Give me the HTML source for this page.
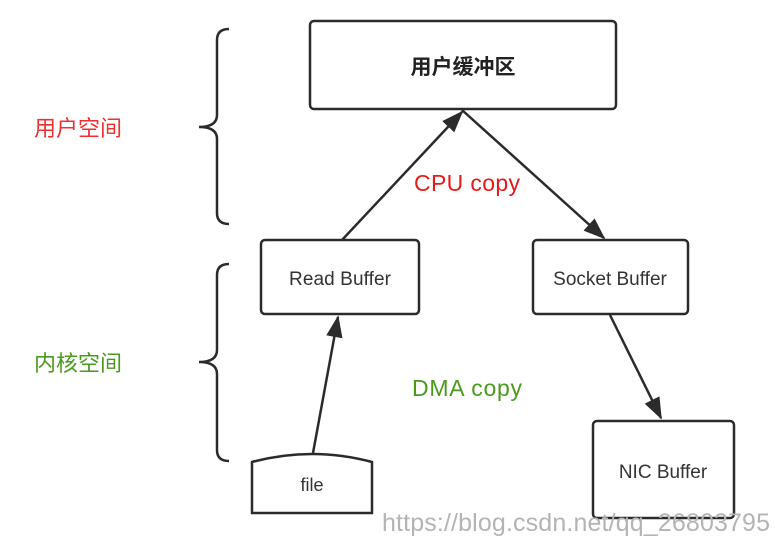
<!DOCTYPE html>
<html><head><meta charset="utf-8"><style>
html,body{margin:0;padding:0;background:#fff;width:775px;height:543px;overflow:hidden}
svg{display:block}
text{font-family:"Liberation Sans","Noto Sans CJK SC",sans-serif}
</style></head><body>
<svg width="775" height="543" viewBox="0 0 775 543">
<defs>
<marker id="b" viewBox="0 0 12 12" refX="11" refY="6" markerWidth="22" markerHeight="22" orient="auto" markerUnits="userSpaceOnUse"><path d="M0,1.5 L12,6 L0,10.5 z" fill="#2b2b2b"/></marker></defs>
<g fill="none" stroke="#2b2b2b" stroke-width="2.5">
<rect x="310" y="21" width="306" height="88" rx="4"/>
<rect x="261" y="240" width="158" height="74" rx="4"/>
<rect x="533" y="240" width="155" height="74" rx="4"/>
<rect x="593" y="421" width="141" height="97" rx="4"/>
<path d="M252,513 L252,462 Q312,446 372,462 L372,513 Z"/>
<path d="M229,29 Q217,29 217,40 L217,115 Q217,127 199,127 Q217,127 217,139 L217,213 Q217,224 229,224"/>
<path d="M229,264 Q217,264 217,275 L217,350 Q217,362 199,362 Q217,362 217,374 L217,450 Q217,461 229,461"/>
<line x1="342" y1="240" x2="462" y2="112" marker-end="url(#b)"/>
<line x1="462" y1="110" x2="604" y2="238" marker-end="url(#b)"/>
<line x1="313" y1="453" x2="338" y2="317" marker-end="url(#b)"/>
<line x1="610" y1="315" x2="661" y2="418" marker-end="url(#b)"/>
</g>
<text x="463" y="74" font-size="21" font-weight="bold" text-anchor="middle" fill="#222">用户缓冲区</text>
<text x="340" y="285" font-size="19" text-anchor="middle" fill="#333" textLength="102">Read Buffer</text>
<text x="610" y="285" font-size="19" text-anchor="middle" fill="#333">Socket Buffer</text>
<text x="663" y="478" font-size="19" text-anchor="middle" fill="#333">NIC Buffer</text>
<text x="312" y="491" font-size="18" text-anchor="middle" fill="#333">file</text>
<text x="414" y="191" font-size="23" fill="#e51a1a" textLength="106">CPU copy</text>
<text x="412" y="396" font-size="23" fill="#4a9a1e" textLength="110">DMA copy</text>
<text x="34" y="136" font-size="22" fill="#ee3030">用户空间</text>
<text x="34" y="371" font-size="22" fill="#4a9a1e">内核空间</text>
<text x="382" y="531" font-size="25" fill="#b4b4b4" textLength="388">https://blog.csdn.net/qq_26803795</text>
</svg>
</body></html>
